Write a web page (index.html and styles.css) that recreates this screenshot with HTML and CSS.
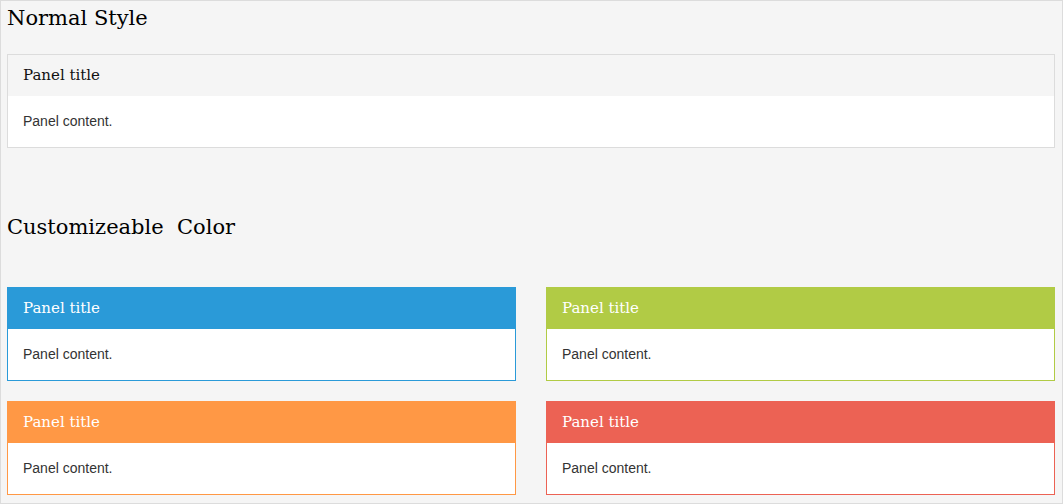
FILE: index.html
```html
<!DOCTYPE html>
<html lang="en">

<head>
  <meta charset="UTF-8">
  <meta name="viewport" content="width=device-width, initial-scale=1.0">
  <link rel="stylesheet" href="styles.css">
  <title>Panels</title>
</head>

<body>
  <div class="page">
    <h2 class="heading">Normal Style</h2>
    <div class="panel normal">
      <div class="panel-head">Panel title</div>
      <div class="panel-body">Panel content.</div>
    </div>

    <h2 class="heading second">Customizeable&nbsp; Color</h2>
    <div class="grid">
      <div class="panel blue">
        <div class="panel-head">Panel title</div>
        <div class="panel-body">Panel content.</div>
      </div>
      <div class="panel green">
        <div class="panel-head">Panel title</div>
        <div class="panel-body">Panel content.</div>
      </div>
      <div class="panel orange">
        <div class="panel-head">Panel title</div>
        <div class="panel-body">Panel content.</div>
      </div>
      <div class="panel red">
        <div class="panel-head">Panel title</div>
        <div class="panel-body">Panel content.</div>
      </div>
    </div>
  </div>
</body>

</html>
```

FILE: styles.css
```css
html,
body {
  margin: 0;
  height: 100%;
}

body {
  background-color: #f5f5f5;
  font-family: "Liberation Sans", Arial, sans-serif;
}

.page {
  box-sizing: border-box;
  height: 504px;
  border: 1px solid #dcdcdc;
  padding: 0 7px 0 6px;
}

.heading {
  margin: 0;
  font-family: "DejaVu Serif", serif;
  font-weight: normal;
  font-size: 21px;
  line-height: 34px;
  color: #000;
}

.heading.second {
  margin-top: 62px;
}

.panel {
  border: 1px solid #dcdcdc;
  background-color: #fff;
}

.normal {
  margin-top: 19px;
}

.panel-head {
  height: 41px;
  padding: 0 15px;
  line-height: 40px;
  font-family: "DejaVu Serif", serif;
  font-size: 15px;
  color: #fff;
}

.normal .panel-head {
  background-color: #f5f5f5;
  color: #111;
}

.panel-body {
  padding: 15px;
  font-size: 14px;
  line-height: 21px;
  color: #333;
}

.grid {
  margin-top: 43px;
  display: grid;
  grid-template-columns: 1fr 1fr;
  column-gap: 30px;
  row-gap: 20px;
}

.grid .panel-head {
  margin: -1px -1px 0;
  height: 42px;
  line-height: 42px;
  padding: 0 16px;
}

.blue {
  border-color: #2a9ad8;
}

.blue .panel-head {
  background-color: #2a9ad8;
}

.green {
  border-color: #b1cb45;
}

.green .panel-head {
  background-color: #b1cb45;
}

.orange {
  border-color: #ff9845;
}

.orange .panel-head {
  background-color: #ff9845;
}

.red {
  border-color: #ec6254;
}

.red .panel-head {
  background-color: #ec6254;
}
```
